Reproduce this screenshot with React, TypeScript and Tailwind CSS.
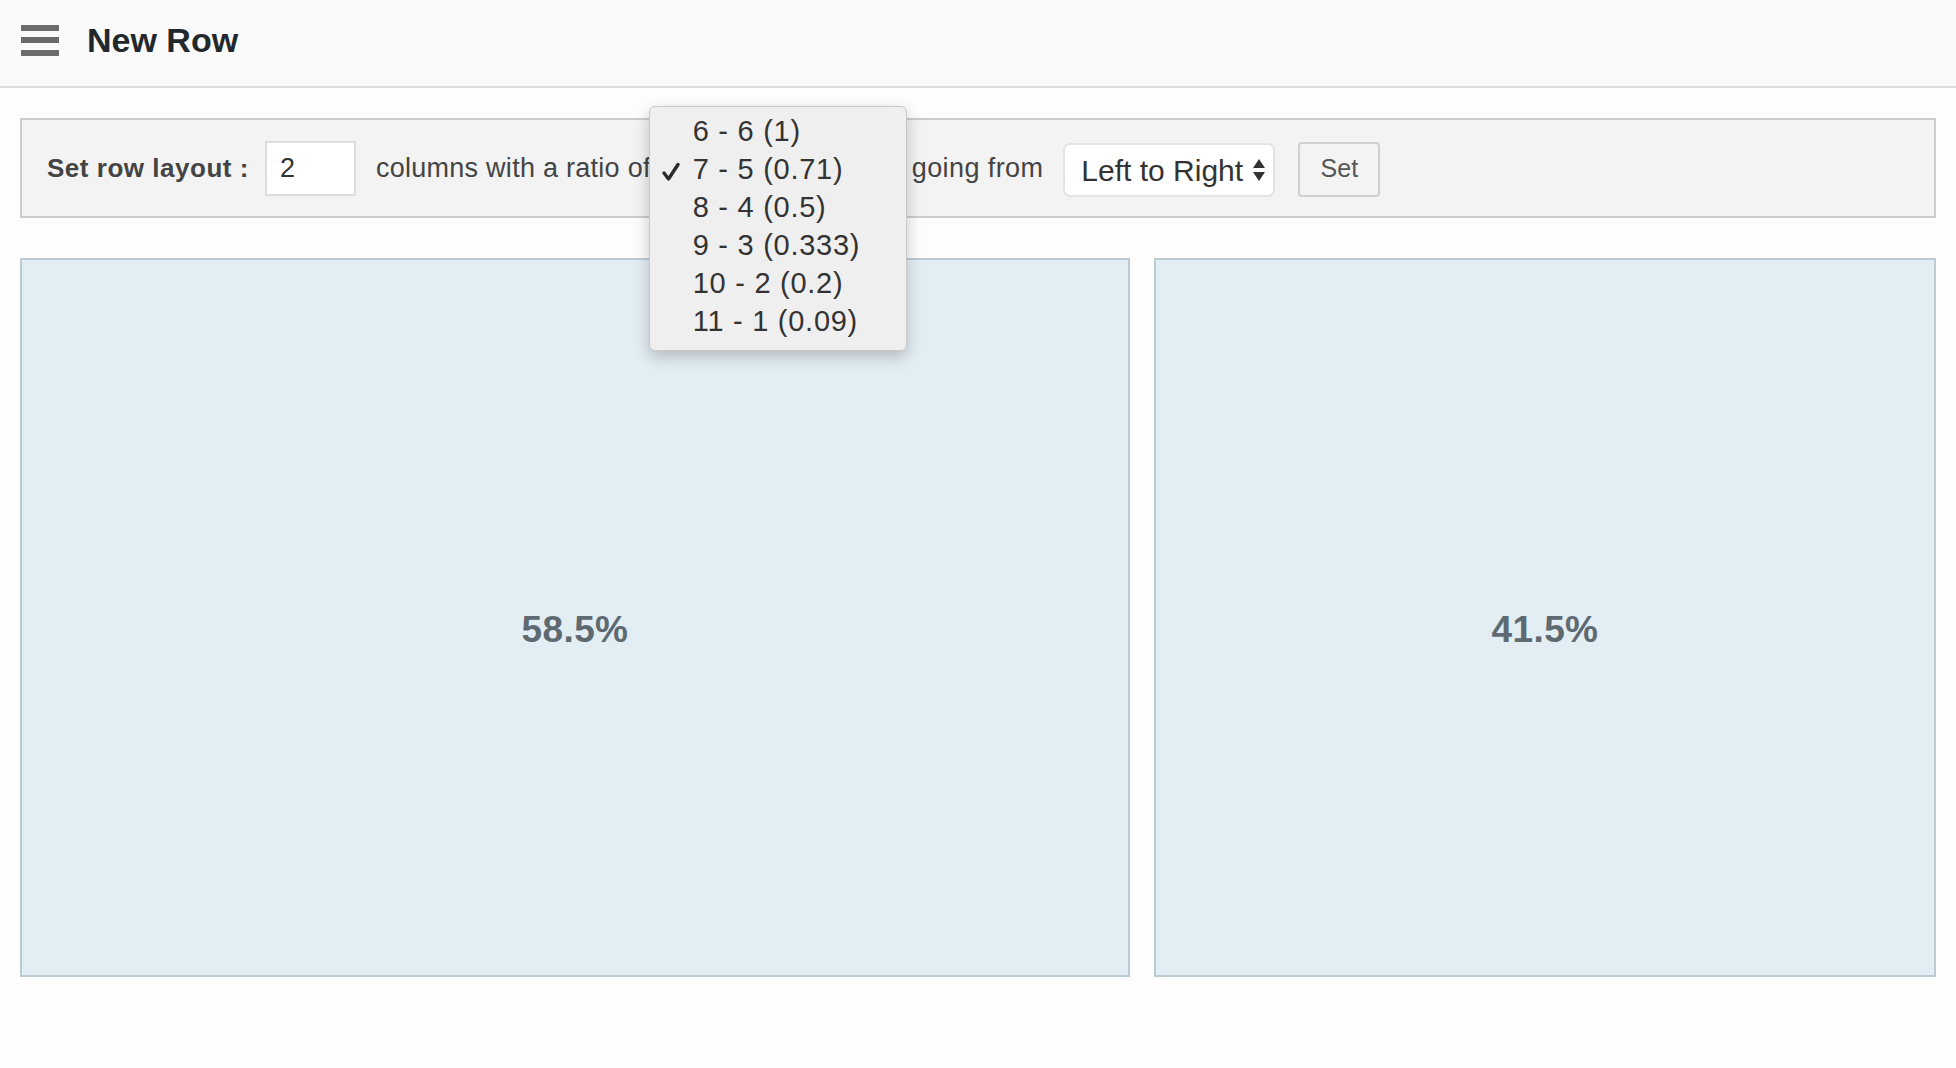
import { useState } from 'react'

const ratios = [
  { label: '6 - 6 (1)', left: 50, right: 50 },
  { label: '7 - 5 (0.71)', left: 58.5, right: 41.5 },
  { label: '8 - 4 (0.5)', left: 66.6, right: 33.4 },
  { label: '9 - 3 (0.333)', left: 75, right: 25 },
  { label: '10 - 2 (0.2)', left: 83.3, right: 16.7 },
  { label: '11 - 1 (0.09)', left: 91.6, right: 8.4 },
]

function Hamburger() {
  return (
    <button className="flex w-[38px] flex-col gap-[6.5px]">
      <span className="block h-[6px] w-full bg-[#6b6b6b]" />
      <span className="block h-[6px] w-full bg-[#6b6b6b]" />
      <span className="block h-[6px] w-full bg-[#6b6b6b]" />
    </button>
  )
}

function UpDownArrows() {
  return (
    <svg width="14" height="24" viewBox="0 0 14 24" className="shrink-0">
      <path d="M7 1 L13 10 L1 10 Z" fill="#333" />
      <path d="M7 23 L13 14 L1 14 Z" fill="#333" />
    </svg>
  )
}

export default function App() {
  const [cols, setCols] = useState('2')
  const [selected] = useState(1)
  const current = ratios[selected]

  return (
    <div className="min-h-screen bg-[#fdfdfd] font-['Liberation_Sans',Arial,sans-serif]">
      {/* top bar */}
      <header className="flex h-[88px] items-center border-b-2 border-[#dcdcdc] bg-[#fafafa] pb-[6px] pl-[21px]">
        <Hamburger />
        <h1 className="ml-[28px] text-[34px] font-bold leading-none text-[#23282d]">New Row</h1>
      </header>

      <div className="px-[20px] pt-[30px]">
        {/* layout toolbar */}
        <div className="flex h-[100px] items-center border-2 border-[#cccccc] bg-[#f3f3f3] pl-[25px] text-[27px] text-[#444]">
          <span className="text-[26px] font-bold tracking-[0.02em] text-[#444]">Set row layout&nbsp;:</span>
          <input
            value={cols}
            onChange={(e) => setCols(e.target.value)}
            className="ml-[16px] h-[55px] w-[91px] border-2 border-[#dddddd] bg-white pl-[13px] text-[27px] text-[#333] outline-none"
          />
          <span className="ml-[20px] whitespace-nowrap tracking-[0.01em]">columns with a ratio of</span>

          {/* ratio select, open: the popup covers the closed control */}
          <div className="relative h-[54px] w-[241px] shrink-0">
            <div className="h-full rounded-[7px] border border-[#dddddd] bg-white" />
            <div className="absolute left-[-2px] top-[-35px] z-10 w-[258px] rounded-[6px] border border-[#c8c8c8] bg-[#efefef] pb-[9px] pt-[6px] text-[29px] tracking-[0.025em] text-[#333] shadow-[0_6px_16px_rgba(0,0,0,0.22)]">
              {ratios.map((r, i) => (
                <div key={r.label} className="relative flex h-[38px] items-center pl-[43px]">
                  {i === selected && (
                    <svg width="20" height="20" viewBox="0 0 20 20" className="absolute left-[11px] top-[11px]">
                      <path d="M3 11 L7.5 17 L17 2.5" fill="none" stroke="#2b2b2b" strokeWidth="3.4" strokeLinecap="round" strokeLinejoin="round" />
                    </svg>
                  )}
                  {r.label}
                </div>
              ))}
            </div>
          </div>

          <span className="ml-[20px] whitespace-nowrap tracking-[0.015em]">going from</span>

          <div className="ml-[20px] mt-[4px] flex h-[54px] w-[212px] shrink-0 items-center justify-between rounded-[7px] border-2 border-[#e3e3e3] bg-white pl-[16px] pr-[7px] text-[30px] text-[#333]">
            <span>Left to Right</span>
            <UpDownArrows />
          </div>

          <button className="ml-[23px] mt-[2px] h-[55px] w-[82px] shrink-0 rounded-[4px] border-2 border-[#d0d0d0] bg-[#f3f3f3] text-[25px] text-[#555]">
            Set
          </button>
        </div>

        {/* columns preview */}
        <div className="mt-[40px] flex h-[719px] gap-[24px]">
          <div className="flex w-[1110px] items-center justify-center border-2 border-[#bccbd3] bg-[#e3eef4] pt-[24px]">
            <span className="text-[37px] font-bold tracking-[0.01em] text-[#5e6a71]">{current.left}%</span>
          </div>
          <div className="flex flex-1 items-center justify-center border-2 border-[#bccbd3] bg-[#e3eef4] pt-[24px]">
            <span className="text-[37px] font-bold tracking-[0.01em] text-[#5e6a71]">{current.right}%</span>
          </div>
        </div>
      </div>
    </div>
  )
}
